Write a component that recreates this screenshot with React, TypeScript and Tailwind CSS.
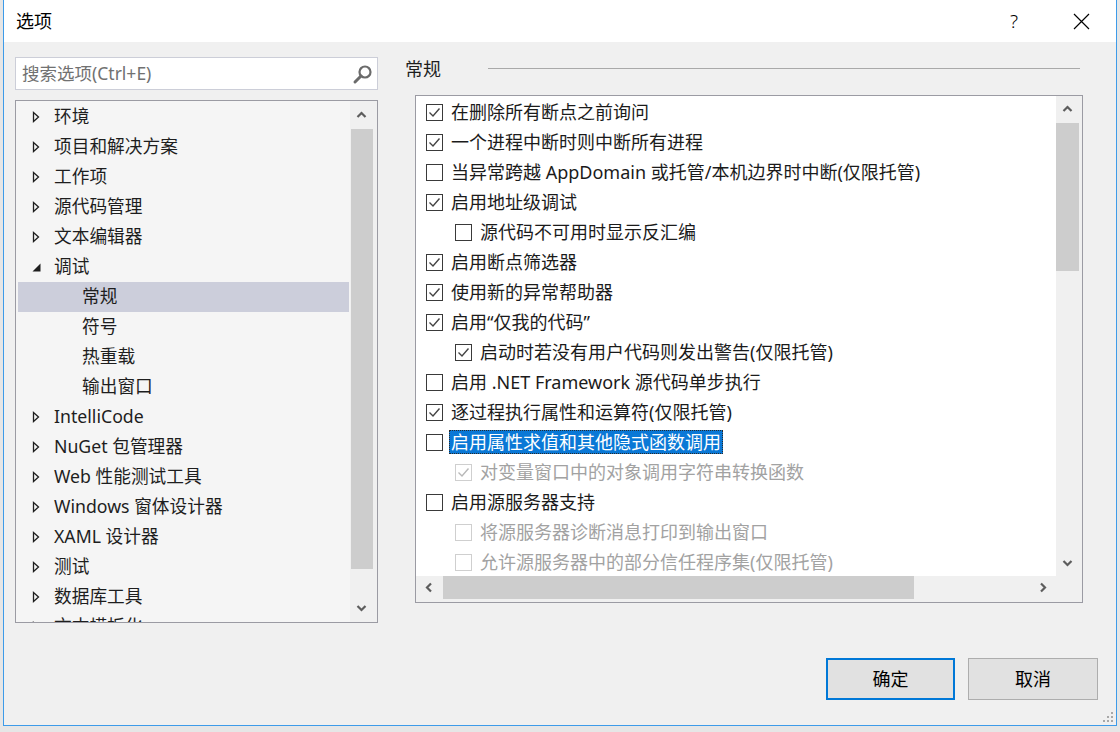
import React from "react";

type TreeItem = { label: string; level: 0 | 1; state?: "collapsed" | "expanded"; selected?: boolean };

const treeItems: TreeItem[] = [
  { label: "环境", level: 0, state: "collapsed" },
  { label: "项目和解决方案", level: 0, state: "collapsed" },
  { label: "工作项", level: 0, state: "collapsed" },
  { label: "源代码管理", level: 0, state: "collapsed" },
  { label: "文本编辑器", level: 0, state: "collapsed" },
  { label: "调试", level: 0, state: "expanded" },
  { label: "常规", level: 1, selected: true },
  { label: "符号", level: 1 },
  { label: "热重载", level: 1 },
  { label: "输出窗口", level: 1 },
  { label: "IntelliCode", level: 0, state: "collapsed" },
  { label: "NuGet 包管理器", level: 0, state: "collapsed" },
  { label: "Web 性能测试工具", level: 0, state: "collapsed" },
  { label: "Windows 窗体设计器", level: 0, state: "collapsed" },
  { label: "XAML 设计器", level: 0, state: "collapsed" },
  { label: "测试", level: 0, state: "collapsed" },
  { label: "数据库工具", level: 0, state: "collapsed" },
  { label: "文本模板化", level: 0, state: "collapsed" },
];

type Option = { label: string; checked: boolean; indent?: boolean; disabled?: boolean; focused?: boolean };

const options: Option[] = [
  { label: "在删除所有断点之前询问", checked: true },
  { label: "一个进程中断时则中断所有进程", checked: true },
  { label: "当异常跨越 AppDomain 或托管/本机边界时中断(仅限托管)", checked: false },
  { label: "启用地址级调试", checked: true },
  { label: "源代码不可用时显示反汇编", checked: false, indent: true },
  { label: "启用断点筛选器", checked: true },
  { label: "使用新的异常帮助器", checked: true },
  { label: "启用“仅我的代码”", checked: true },
  { label: "启动时若没有用户代码则发出警告(仅限托管)", checked: true, indent: true },
  { label: "启用 .NET Framework 源代码单步执行", checked: false },
  { label: "逐过程执行属性和运算符(仅限托管)", checked: true },
  { label: "启用属性求值和其他隐式函数调用", checked: false, focused: true },
  { label: "对变量窗口中的对象调用字符串转换函数", checked: true, indent: true, disabled: true },
  { label: "启用源服务器支持", checked: false },
  { label: "将源服务器诊断消息打印到输出窗口", checked: false, indent: true, disabled: true },
  { label: "允许源服务器中的部分信任程序集(仅限托管)", checked: false, indent: true, disabled: true },
];

function Chevron({ dir }: { dir: "up" | "down" | "left" | "right" }) {
  const d = {
    up: "M1.5 7 L5.5 3 L9.5 7",
    down: "M1.5 4 L5.5 8 L9.5 4",
    left: "M7 1.5 L3 5.5 L7 9.5",
    right: "M4 1.5 L8 5.5 L4 9.5",
  }[dir];
  return (
    <svg width="11" height="11" viewBox="0 0 11 11" fill="none">
      <path d={d} stroke="#5d5d5d" strokeWidth="2.2" />
    </svg>
  );
}

function Check({ checked, disabled }: { checked: boolean; disabled?: boolean }) {
  return (
    <span
      className={
        disabled
          ? "flex h-[17px] w-[17px] shrink-0 items-center justify-center border border-[#cfcfcf] bg-white"
          : "flex h-[17px] w-[17px] shrink-0 items-center justify-center border-[1.5px] border-[#3a3a3a] bg-white"
      }
    >
      {checked && (
        <svg width="15" height="15" viewBox="0 0 15 15" fill="none">
          <path d="M2.5 7.5 L6 11 L12.5 3.5" stroke={disabled ? "#b8b8b8" : "#444444"} strokeWidth="1.4" />
        </svg>
      )}
    </span>
  );
}

function TreeArrow({ state }: { state?: "collapsed" | "expanded" }) {
  if (state === "expanded") {
    return (
      <svg width="9" height="9" viewBox="0 0 9 9">
        <path d="M8.5 0.5 L8.5 8.5 L0.5 8.5 Z" fill="#1e1e1e" />
      </svg>
    );
  }
  if (state === "collapsed") {
    return (
      <svg width="8" height="12" viewBox="0 0 8 12" fill="none">
        <path d="M1.5 1.5 L6.5 6 L1.5 10.5 Z" stroke="#1e1e1e" strokeWidth="1.3" />
      </svg>
    );
  }
  return null;
}

export default function App() {
  return (
    <div className="h-[732px] w-[1120px] overflow-hidden bg-[#e6e6e6] pl-[3px] font-['Noto_Sans','Noto_Sans_CJK_SC',sans-serif] text-[#1e1e1e]">
      {/* dialog window */}
      <div className="relative flex h-[726px] w-[1114px] flex-col border-x border-b border-[#3d9be9] bg-white">
        {/* title bar */}
        <div className="flex h-[42px] shrink-0 items-center bg-white">
          <span className="pl-[12px] text-[18px] leading-none text-black">选项</span>
          <div className="flex-1" />
          <span className="flex h-[42px] w-[40px] items-center justify-center text-[19px] font-light leading-none text-black">?</span>
          <span className="ml-[27px] flex h-[42px] w-[40px] items-center justify-center">
            <svg width="17" height="17" viewBox="0 0 17 17" fill="none">
              <path d="M1 1 L16 16 M16 1 L1 16" stroke="#000" strokeWidth="1.2" />
            </svg>
          </span>
          <span className="w-[15px]" />
        </div>

        {/* body */}
        <div className="flex flex-1 flex-col bg-[#f0f0f0] pt-[15px]">
          <div className="flex">
            {/* left column */}
            <div className="ml-[11px] flex w-[363px] flex-col">
              <div className="flex h-[33px] items-center border border-[#ccced8] bg-white pl-[6px] pr-[3px]">
                <span className="flex-1 text-[17.5px] leading-none text-[#717171]">搜索选项(Ctrl+E)</span>
                <svg width="22" height="22" viewBox="0 0 22 22" fill="none">
                  <circle cx="13" cy="9" r="5.5" stroke="#6b6b6b" strokeWidth="2.2" />
                  <path d="M9 13 L3 19" stroke="#6b6b6b" strokeWidth="3" strokeLinecap="round" />
                </svg>
              </div>
              <div className="mt-[10px] grid h-[523px] grid-cols-[1fr_27px] border border-[#9b9ba3] bg-[#f5f5f5]">
                <div className="overflow-hidden pt-[1px]">
                  {treeItems.map((it, i) => (
                    <div
                      key={i}
                      className={
                        it.selected
                          ? "ml-[2px] mr-[1px] flex h-[30px] items-center bg-[#cccedb] text-[17.7px] leading-none"
                          : "ml-[2px] mr-[1px] flex h-[30px] items-center text-[17.7px] leading-none"
                      }
                    >
                      <span className="ml-[14px] flex w-[22px] items-center">
                        <TreeArrow state={it.state} />
                      </span>
                      <span className={it.level === 1 ? "ml-[28px] whitespace-nowrap" : "whitespace-nowrap"}>{it.label}</span>
                    </div>
                  ))}
                </div>
                <div className="flex flex-col bg-[#f0f0f0]">
                  <div className="flex h-[28px] items-center justify-center pr-[4px]">
                    <Chevron dir="up" />
                  </div>
                  <div className="ml-[1px] h-[440px] w-[22px] bg-[#cdcdcd]" />
                  <div className="flex-1" />
                  <div className="flex h-[29px] items-center justify-center pr-[4px]">
                    <Chevron dir="down" />
                  </div>
                </div>
              </div>
            </div>

            {/* right column */}
            <div className="ml-[27px] flex w-[678px] flex-col">
              <div className="flex h-[23px] items-center">
                <span className="text-[18px] leading-none">常规</span>
                <div className="ml-[47px] mr-[3px] h-px flex-1 bg-[#a9a9a9]" />
              </div>
              <div className="ml-[10px] mt-[15px] grid h-[508px] grid-cols-[1fr_26px] grid-rows-[1fr_26px] border border-[#9b9ba3] bg-white">
                <div className="overflow-hidden pt-[1px]">
                  {options.map((o, i) => (
                    <div
                      key={i}
                      className={
                        o.indent
                          ? "flex h-[30px] items-center whitespace-nowrap pl-[39px] text-[18px] leading-none"
                          : "flex h-[30px] items-center whitespace-nowrap pl-[10px] text-[18px] leading-none"
                      }
                    >
                      <Check checked={o.checked} disabled={o.disabled} />
                      {o.focused ? (
                        <span className="ml-[6px] border border-dotted border-[#2a2a2a] bg-[#0a78d6] px-[1px] py-[2px] text-white">
                          {o.label}
                        </span>
                      ) : (
                        <span className={o.disabled ? "ml-[8px] text-[#a2a2a2]" : "ml-[8px] text-[#1b1b1b]"}>{o.label}</span>
                      )}
                    </div>
                  ))}
                </div>
                <div className="flex flex-col bg-[#f0f0f0]">
                  <div className="flex h-[27px] items-center justify-center pr-[3px]">
                    <Chevron dir="up" />
                  </div>
                  <div className="h-[148px] w-[23px] bg-[#cdcdcd]" />
                  <div className="flex-1" />
                  <div className="flex h-[27px] items-center justify-center pr-[3px]">
                    <Chevron dir="down" />
                  </div>
                </div>
                <div className="flex bg-[#f0f0f0]">
                  <div className="flex w-[27px] items-center justify-center pb-[3px]">
                    <Chevron dir="left" />
                  </div>
                  <div className="h-[23px] w-[471px] bg-[#cdcdcd]" />
                  <div className="flex-1" />
                  <div className="flex w-[27px] items-center justify-center pb-[3px]">
                    <Chevron dir="right" />
                  </div>
                </div>
                <div className="bg-[#f0f0f0]" />
              </div>
            </div>
          </div>

          {/* buttons */}
          <div className="mt-[35px] flex justify-end gap-[13px] pr-[18px]">
            <button className="flex h-[42px] w-[129px] items-center justify-center border-2 border-[#0078d7] bg-[#e1e1e1] text-[18px] leading-none text-black">
              确定
            </button>
            <button className="flex h-[42px] w-[130px] items-center justify-center border border-[#adadad] bg-[#e1e1e1] text-[18px] leading-none text-black">
              取消
            </button>
          </div>
        </div>

        {/* resize grip */}
        <div className="absolute bottom-[3px] right-[3px] grid grid-cols-3 gap-[2px]">
          <span className="h-[2px] w-[2px]" />
          <span className="h-[2px] w-[2px]" />
          <span className="h-[2px] w-[2px] bg-[#a8a8a8]" />
          <span className="h-[2px] w-[2px]" />
          <span className="h-[2px] w-[2px] bg-[#a8a8a8]" />
          <span className="h-[2px] w-[2px] bg-[#a8a8a8]" />
          <span className="h-[2px] w-[2px] bg-[#a8a8a8]" />
          <span className="h-[2px] w-[2px] bg-[#a8a8a8]" />
          <span className="h-[2px] w-[2px] bg-[#a8a8a8]" />
        </div>
      </div>
    </div>
  );
}
